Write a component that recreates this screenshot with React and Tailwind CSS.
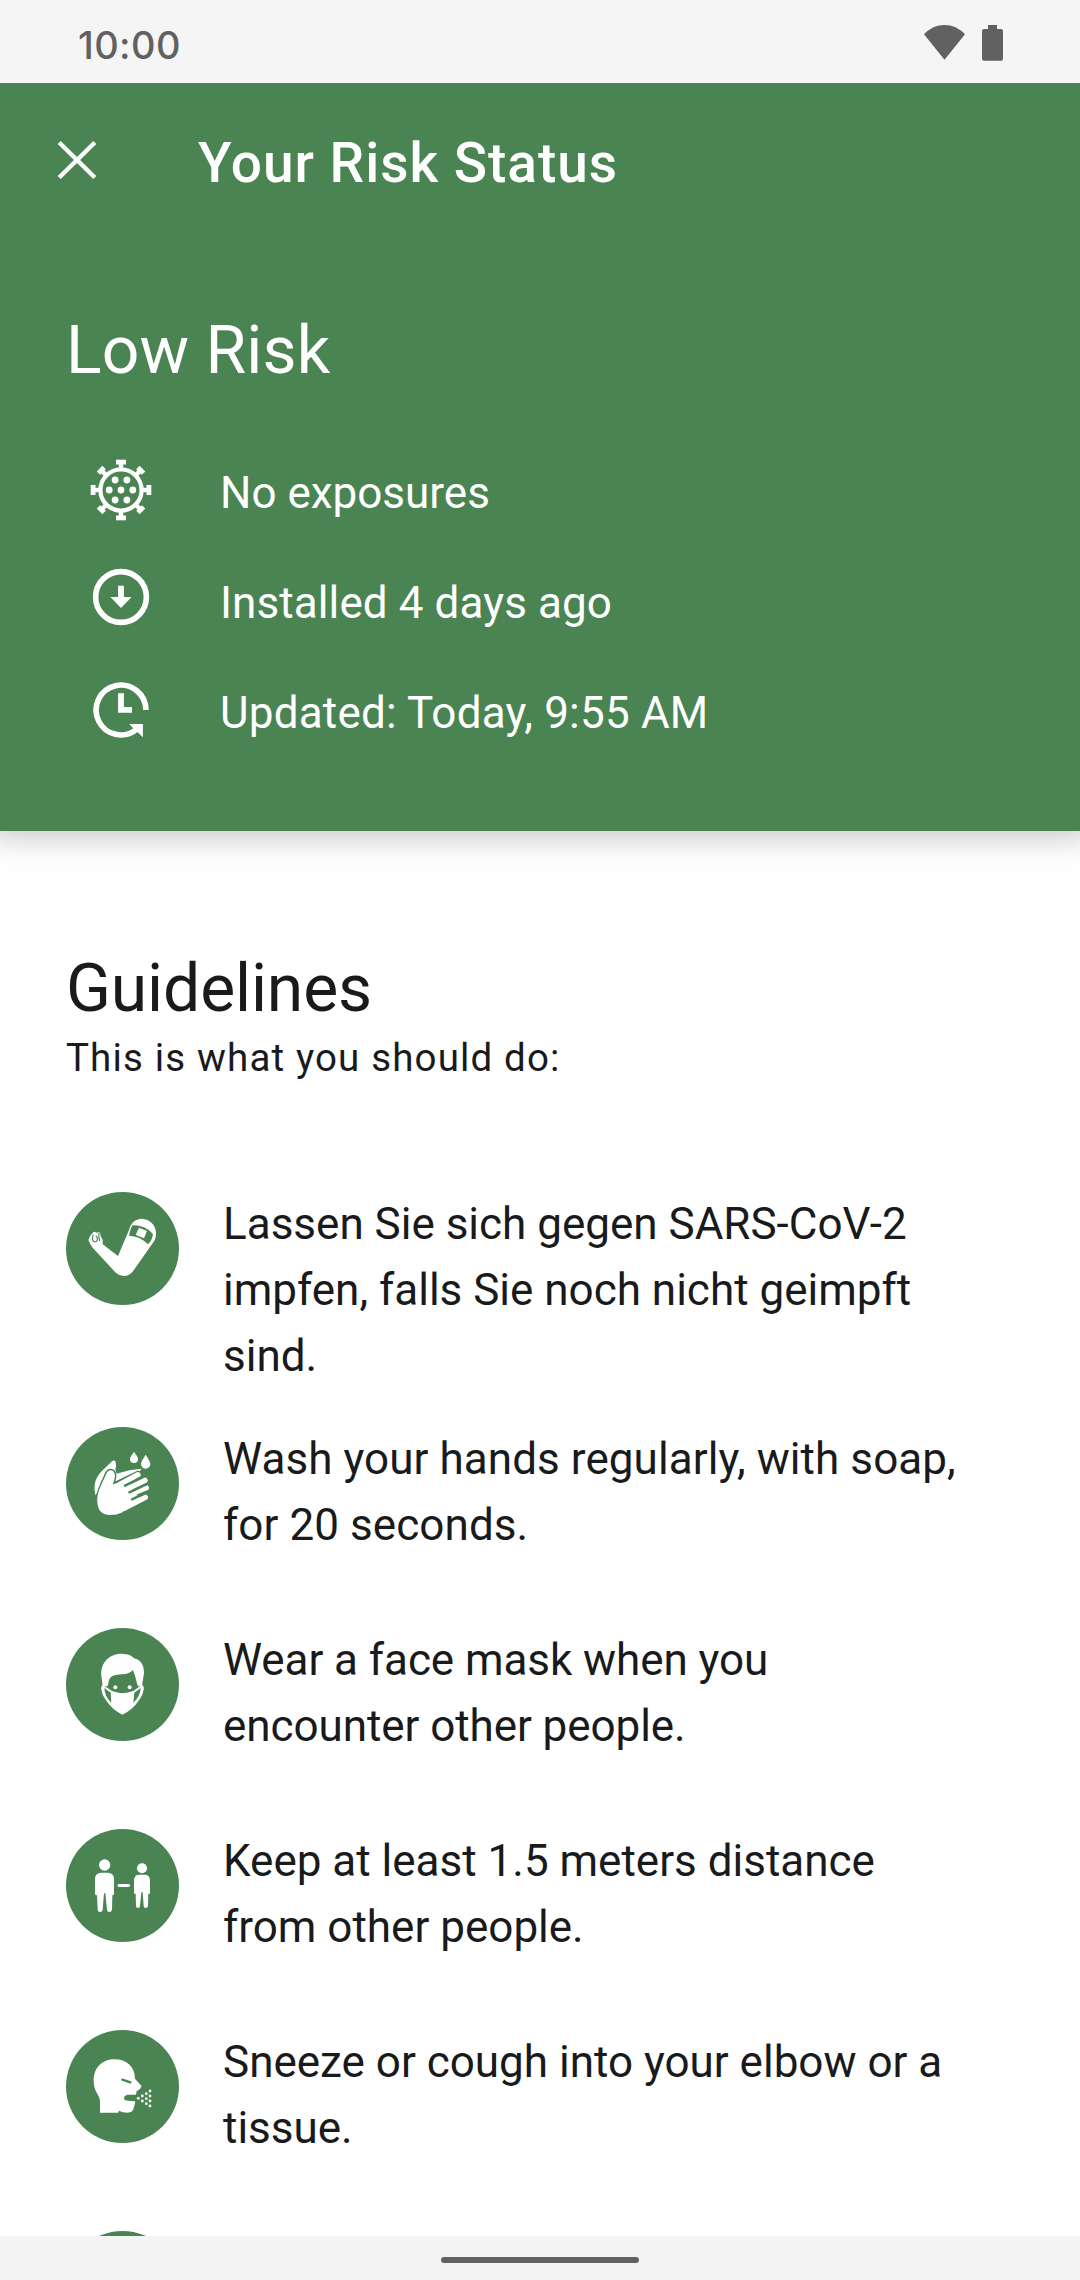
const CloseIcon = () => (
  <svg viewBox="0 0 66 66" className="size-[66px]" fill="none" stroke="currentColor" strokeWidth="4.4">
    <path d="M15.2 15.5L50.8 50.5M50.8 15.5L15.2 50.5" />
  </svg>
);

const VirusIcon = () => (
  <svg viewBox="-33 -33 66 66" className="size-[66px]" fill="currentColor">
    <circle r="20.6" fill="none" stroke="currentColor" strokeWidth="4.2" />
    {[0, 45, 90, 135, 180, 225, 270, 315].map((a) => (
      <g key={a} transform={`rotate(${a})`}>
        <rect x={a % 90 ? -4 : -5} y="-30.3" width={a % 90 ? 8 : 10} height="4.8" />
        <rect x="-2.2" y="-27" width="4.4" height="6" />
      </g>
    ))}
    {[[-11.8, 0], [0, 0], [11.8, 0], [-5.9, -10], [5.9, -10], [-5.9, 10], [5.9, 10]].map(([x, y]) => (
      <circle key={`${x} ${y}`} cx={x} cy={y} r="3.4" />
    ))}
  </svg>
);

const InstalledIcon = () => (
  <svg viewBox="-33 -33 66 66" className="size-[66px]" fill="currentColor">
    <circle r="25.4" fill="none" stroke="currentColor" strokeWidth="5.6" />
    <path d="M-2.9 -11.3H2.9V0H10.6L0 11L-10.6 0H-2.9Z" />
  </svg>
);

const UpdatedIcon = () => (
  <svg viewBox="-33 -33 66 66" className="size-[66px]" fill="currentColor">
    <path d="M24.9 0A24.9 24.9 0 1 0 15.6 19.4" fill="none" stroke="currentColor" strokeWidth="5.6" />
    <path d="M8.4 14H21.9V27.2L16.4 22L12.6 18.7Z" />
    <path d="M-2.9 -16.7H2.9V-3H11V2.7H-2.9Z" />
  </svg>
);

const Arm = () => (
  <svg viewBox="48 36 339 339" className="size-full" fill="white">
    <path d="M115 180L122 165L131 156Q135 154 138 158L148 157Q152 161 152 168L158 179V193L204 228L237 150C243 128 256 117 275 116C300 117 318 136 318 160C318 172 315 180 310 187L249 274Q238 288 222 288Q208 288 198 279L128 203Q120 194 115 180Z" />
    <path d="M247 136Q286 135 309 162Q307 180 294 193Q270 168 237 167Q240 149 247 136Z" className="fill-[#4a8452]" />
    <path d="M267 143L291 153L282 175L257 165Z" />
    <path d="M130 163Q124 180 132 185Q141 187 142 178Q143 170 137 168M147 159Q145 172 149 183" fill="none" strokeWidth="3.5" className="stroke-[#4a8452]" />
  </svg>
);

const Hands = () => (
  <svg viewBox="48 36 339 339" className="size-full" fill="white">
    <path d="M252 110C258 120 264 125 264 132A12 12 0 0 1 240 132C240 125 246 120 252 110Z" />
    <path d="M287 119C293 130 301 138 301 147A14 14 0 0 1 273 147C273 138 281 130 287 119Z" />
    <path d="M136 240C130 210 135 193 152 172L186 139Q194 133 197 141Q200 155 196 164L200 176L238 166L275 161L268 170L200 200L160 215Z" />
    <path d="M142 262C140 240 149 220 156 205L170 174C176 162 190 163 194 176Q197 188 188 208L262 172Q271 170 272 179Q271 185 264 188L230 230L285 254L215 293Q200 300 180 300C155 300 143 285 142 262Z" strokeWidth="9" className="stroke-[#4a8452]" />
    <path d="M142 262C140 240 149 220 156 205L170 174C176 162 190 163 194 176Q197 188 188 208L225 200L270 250L215 293Q200 300 180 300C155 300 143 285 142 262Z" />
    <path d="M200 213L264 179M225 225L285 196M235 240L289 218M222 280L286 247" fill="none" stroke="white" strokeWidth="16" strokeLinecap="round" />
    <path d="M225 212L275 187M238 232L292 207M246 253L290 232" fill="none" strokeWidth="7" strokeLinecap="round" className="stroke-[#4a8452]" />
  </svg>
);

const Mask = () => (
  <svg viewBox="48 39 339 339" className="size-full" fill="white">
    <path d="M158 212L154 182C151 140 180 116 217 116Q242 117 252 130C275 135 282 153 282 175L276 212L264 214L259 198Q255 177 248 165Q240 177 215 178Q182 179 177 195L173 214Z" />
    <circle cx="196" cy="217" r="6" />
    <circle cx="239" cy="217" r="6" />
    <path d="M158 209Q152 214 154 224Q156 241 168 256Q188 286 217 299Q247 286 267 256Q279 241 281 224Q283 214 276 209L250 228Q217 241 186 228Z" />
    <path d="M163 219L182 233L184 264Q164 243 163 219ZM272 219L253 233L250 264Q271 243 272 219Z" className="fill-[#4a8452]" />
  </svg>
);

const Distance = () => (
  <svg viewBox="48 42 339 339" className="size-full" fill="white">
    <circle cx="164" cy="150" r="17" />
    <path d="M135 193Q135 173 154 173H173Q192 173 192 193V236Q192 241 187 241L186 284Q185 291 178 291Q171 291 171 284L166 235H162L158 284Q157 291 150 291Q143 291 143 284L141 241Q135 241 135 236Z" />
    <rect x="203" y="207" width="37" height="9" rx="4" />
    <circle cx="276" cy="160" r="15" />
    <path d="M252 196Q252 179 268 179H284Q300 179 300 196V233Q300 237 295 237L294 273Q293 279 287 279Q282 279 281 273L278 232H274L270 273Q270 279 264 279Q259 279 258 273L257 237Q252 237 252 233Z" />
  </svg>
);

const Sneeze = () => (
  <svg viewBox="48 45 339 339" className="size-full" fill="white">
    <path d="M150 293V258C150 240 131 232 131 197C131 155 160 133 193 133C230 133 255 155 255 191L274 212Q276 219 260 228L258 239H234Q222 241 222 249Q222 257 234 257L255 259Q257 263 252 275C250 289 243 292 232 293Q216 293 207 287L205 293Z" />
    <path d="M217 194L241 202" strokeWidth="7" strokeLinecap="round" className="stroke-[#4a8452]" />
    {[[265, 250], [277, 243], [277, 258], [289, 236], [289, 251], [289, 266], [300, 228], [300, 243], [300, 258], [300, 273]].map(([x, y]) => (
      <circle key={`${x} ${y}`} cx={x} cy={y} r="4.2" />
    ))}
  </svg>
);

const statuses = [
  { Icon: VirusIcon, text: "No exposures", shift: "mb-[6px]", tracking: "" },
  { Icon: InstalledIcon, text: "Installed 4 days ago", shift: "mb-[12px]", tracking: "tracking-[0.1px]" },
  { Icon: UpdatedIcon, text: "Updated: Today, 9:55 AM", shift: "mb-[6px]", tracking: "tracking-[0.2px]" },
];

const guidelines = [
  { Icon: Arm, lines: ["Lassen Sie sich gegen SARS-CoV-2", "impfen, falls Sie noch nicht geimpft", "sind."], tracking: "" },
  { Icon: Hands, lines: ["Wash your hands regularly, with soap,", "for 20 seconds."], tracking: "tracking-[0.07px]" },
  { Icon: Mask, lines: ["Wear a face mask when you", "encounter other people."], tracking: "tracking-[-0.07px]" },
  { Icon: Distance, lines: ["Keep at least 1.5 meters distance", "from other people."], tracking: "" },
  { Icon: Sneeze, lines: ["Sneeze or cough into your elbow or a", "tissue."], tracking: "" },
  { Icon: null, lines: [], tracking: "" },
];

export default function App() {
  return (
    <div className="flex h-[2280px] w-[1080px] flex-col overflow-hidden bg-white font-['Roboto',sans-serif] text-[#191a1c]">
      <div className="relative z-20 flex h-[83px] shrink-0 items-start justify-between bg-[#f5f5f5] pl-[78px] pr-[77px] text-[#616161]">
        <span className="mt-[21px] font-['Inter',sans-serif] text-[38px] font-medium leading-[48px] tracking-[0.4px]">10:00</span>
        <div className="mt-[25px] flex gap-[17px]">
          <svg viewBox="0 0 41 35" className="h-[35px] w-[41px]" fill="currentColor">
            <path d="M0 9.3C11.5 -3.1 29.5 -3.1 41 9.3L20.5 34.7Z" />
          </svg>
          <svg viewBox="0 0 21 36" className="h-[36px] w-[21px]" fill="currentColor">
            <path d="M6 0H15V4H19Q21 4 21 6V33.5Q21 35.7 19 35.7H2Q0 35.7 0 33.5V6Q0 4 2 4H6Z" />
          </svg>
        </div>
      </div>

      <header className="relative z-10 flex h-[748px] shrink-0 flex-col bg-[#4a8452] text-white shadow-[0_-8px_32px_12px_rgba(0,0,0,0.25)]">
        <div className="flex h-[154px] items-center pl-[44px]">
          <CloseIcon />
          <h1 className="ml-[88px] mt-[6px] text-[55px] font-medium leading-[66px] tracking-[0.97px]">Your Risk Status</h1>
        </div>
        <h2 className="mt-[74px] pl-[66px] text-[66px] leading-[80px] tracking-[0.1px]">Low Risk</h2>
        <ul className="mt-[47px] pl-[88px]">
          {statuses.map(({ Icon, text, shift, tracking }) => (
            <li key={text} className="flex h-[110px] items-center">
              <div className={shift}>
                <Icon />
              </div>
              <span className={`ml-[66px] text-[44px] leading-[66px] ${tracking}`}>{text}</span>
            </li>
          ))}
        </ul>
      </header>

      <main className="flex min-h-0 flex-1 flex-col overflow-hidden px-[66px]">
        <h2 className="mt-[118px] shrink-0 text-[66px] leading-[80px] tracking-[-0.12px]">Guidelines</h2>
        <p className="mt-[6px] shrink-0 text-[38.5px] leading-[46px] tracking-[1.15px]">This is what you should do:</p>
        <ul className="mt-[110px] flex shrink-0 flex-col gap-[37px]">
          {guidelines.map(({ Icon, lines, tracking }, i) => (
            <li key={i} className="flex min-h-[164px] items-start">
              <div className="mt-px size-[113px] shrink-0 overflow-hidden rounded-full bg-[#4a8452]">{Icon && <Icon />}</div>
              <p className={`ml-[44px] whitespace-nowrap text-[44px] leading-[66px] ${tracking}`}>
                {lines.map((line) => (
                  <span key={line} className="block">{line}</span>
                ))}
              </p>
            </li>
          ))}
        </ul>
      </main>

      <div className="flex h-[44px] shrink-0 items-start justify-center bg-[#f4f4f4] pt-[21px]">
        <div className="h-[6px] w-[198px] rounded-full bg-[#616161]" />
      </div>
    </div>
  );
}
